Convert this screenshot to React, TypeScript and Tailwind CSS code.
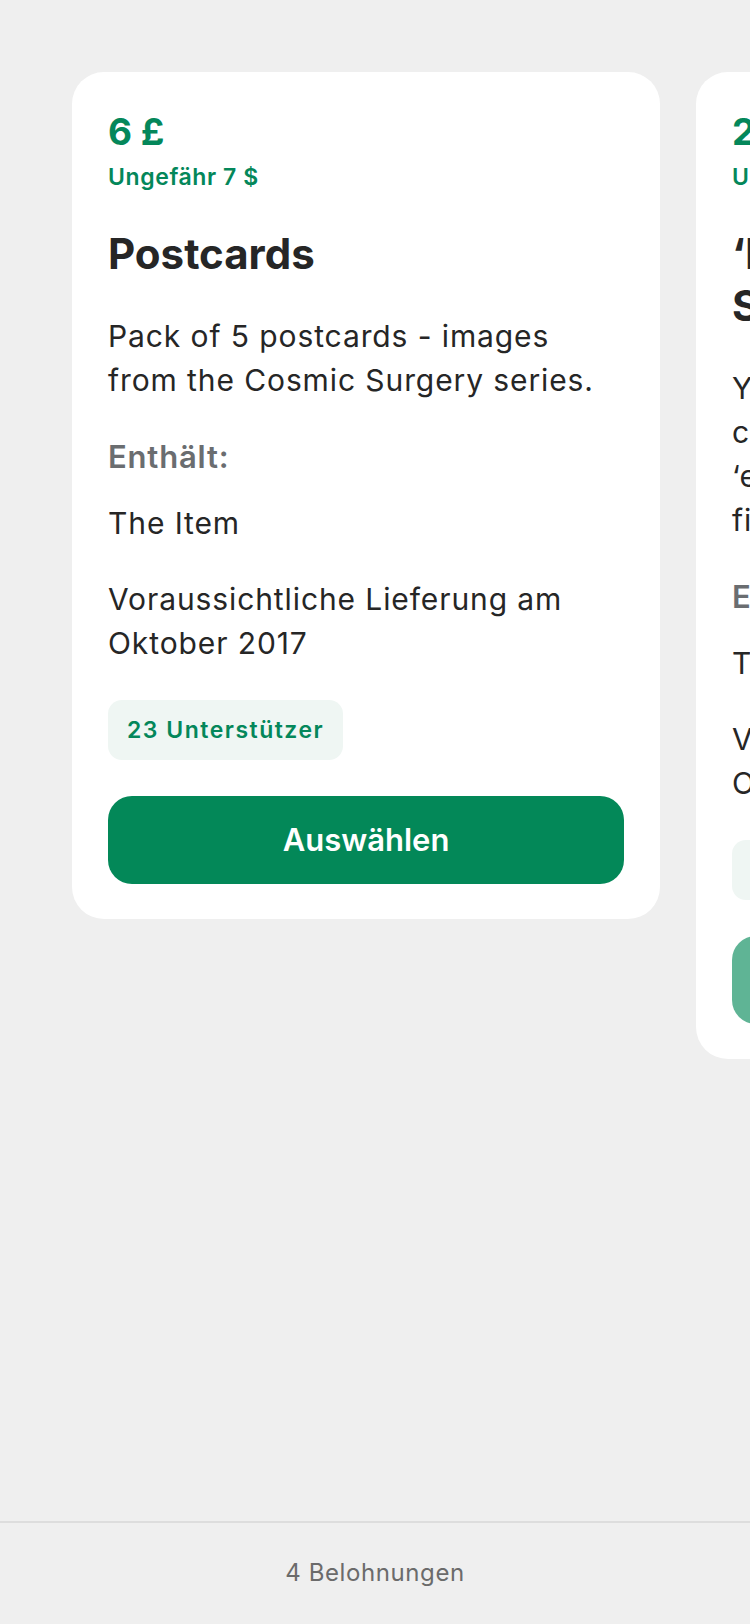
import React from "react";

interface Reward {
  id: number;
  price: string;
  approx: string;
  title: React.ReactNode;
  description: React.ReactNode;
  items: string[];
  delivery: string;
  backers: number;
  disabled?: boolean;
}

const rewards: Reward[] = [
  {
    id: 1,
    price: "6 £",
    approx: "Ungefähr 7 $",
    title: "Postcards",
    description: "Pack of 5 postcards - images from the Cosmic Surgery series.",
    items: ["The Item"],
    delivery: "Voraussichtliche Lieferung am Oktober 2017",
    backers: 23,
  },
  {
    id: 2,
    price: "25 £",
    approx: "Ungefähr 31 $",
    title: (
      <>
        ‘Dreams’ print
        <br />
        Signed edition
      </>
    ),
    description: (
      <>
        You will receive a signed
        <br />
        copy of the limited
        <br />
        ‘edition’ print, ready
        <br />
        finished for framing.
      </>
    ),
    items: ["The Item"],
    delivery: "Voraussichtliche Lieferung am Oktober 2017",
    backers: 12,
    disabled: true,
  },
];

function RewardCard({ r }: { r: Reward }) {
  return (
    <div className="w-[588px] shrink-0 rounded-[32px] bg-white px-[36px] pt-[38px] pb-[35px]">
      <p className="text-[37px] leading-[44px] font-bold text-[#04875a]">{r.price}</p>
      <p className="mt-[9px] text-[23px] leading-[28px] font-semibold tracking-[0.6px] text-[#04875a]">{r.approx}</p>
      <h2 className="mt-[37px] text-[42px] leading-[52px] font-bold text-[#262626]">{r.title}</h2>
      <p className="mt-[34px] text-[30px] leading-[44px] tracking-[0.9px] text-[#262626]">{r.description}</p>
      <p className="mt-[33px] text-[31px] leading-[44px] font-semibold tracking-[0.8px] text-[#6a6d70]">Enthält:</p>
      {r.items.map(i => (
        <p key={i} className="mt-[22px] text-[30px] leading-[44px] tracking-[0.9px] text-[#262626]">{i}</p>
      ))}
      <p className="mt-[32px] text-[30px] leading-[44px] tracking-[0.9px] text-[#262626]">{r.delivery}</p>
      <div className="mt-[35px] flex">
        <span className="flex h-[60px] items-center rounded-[14px] bg-[#eff6f3] px-[19px] text-[23px] font-semibold tracking-[1.5px] text-[#04875a]">
          {r.backers} Unterstützer
        </span>
      </div>
      <button
        className={`mt-[36px] flex h-[88px] w-[516px] items-center justify-center rounded-[24px] text-[31px] font-semibold text-white ${
          r.disabled ? "bg-[#5fb495]" : "bg-[#038858]"
        }`}
      >
        Auswählen
      </button>
    </div>
  );
}

export default function App() {
  return (
    <div
      className="flex h-[1624px] w-[750px] flex-col overflow-hidden bg-[#efefef]"
      style={{ fontFamily: "Inter, 'Noto Sans', sans-serif" }}
    >
      <main className="flex-1 overflow-hidden">
        <div className="flex items-start gap-[36px] pt-[72px] pl-[72px]">
          {rewards.map(r => (
            <RewardCard key={r.id} r={r} />
          ))}
        </div>
      </main>
      <footer className="flex h-[103px] justify-center border-t-2 border-[#dddddd] pt-[34px]">
        <p className="text-[24px] leading-[32px] tracking-[0.6px] text-[#6b6b6b]">4 Belohnungen</p>
      </footer>
    </div>
  );
}
